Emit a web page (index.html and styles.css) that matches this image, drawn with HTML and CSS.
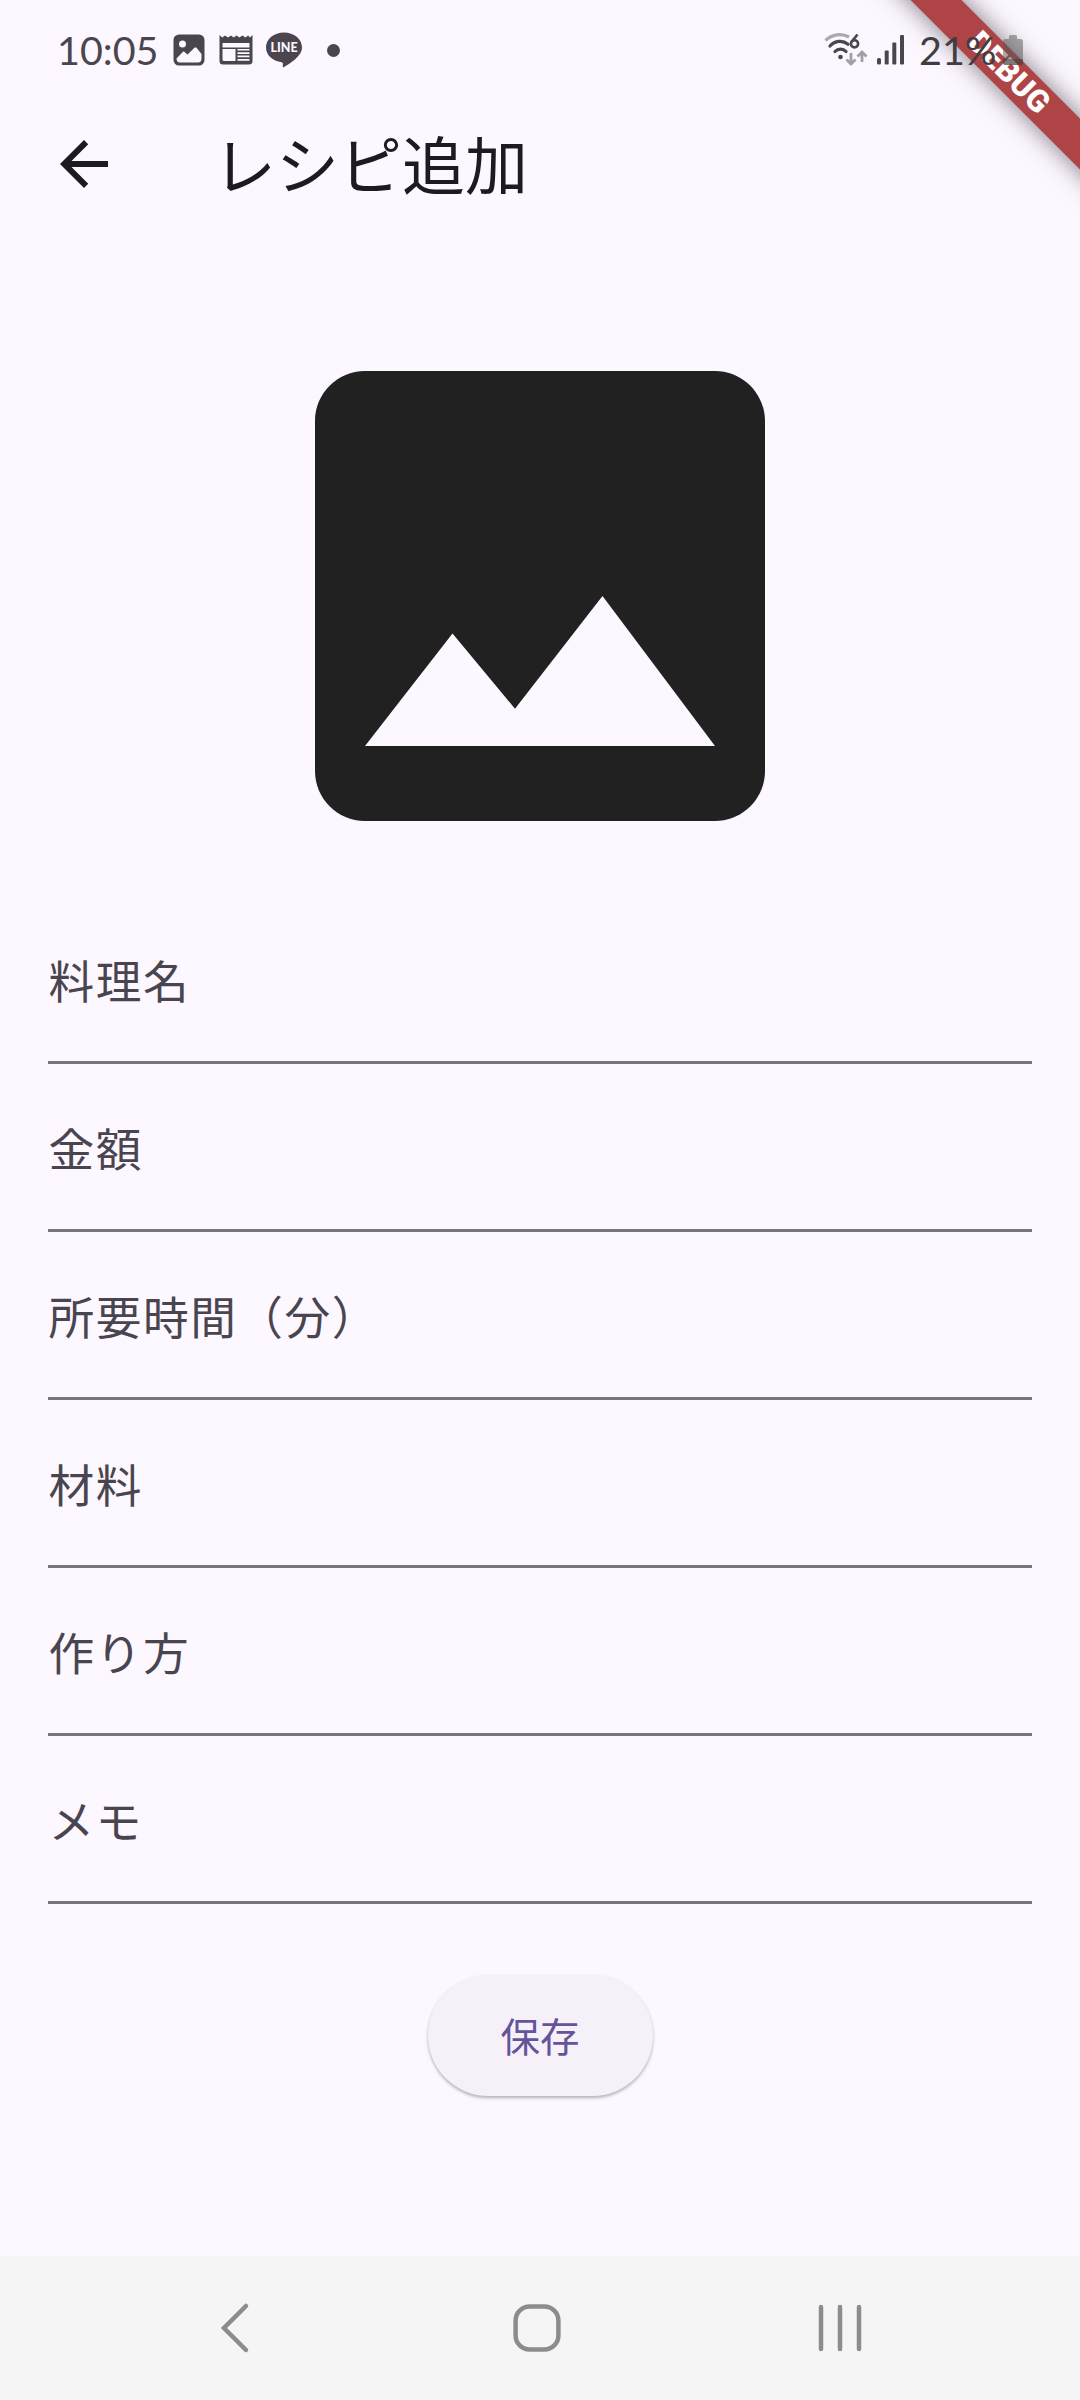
FILE: index.html
```
<!DOCTYPE html>
<html lang="ja">
<head>
<meta charset="utf-8">
<title>レシピ追加</title>
<link rel="stylesheet" href="styles.css">
</head>
<body>
<div class="screen">
  <div class="debug-banner">DEBUG</div>

  <header class="status-bar">
    <div class="status-left">
      <span class="clock">10:05</span>
      <svg class="icon-gallery" width="32" height="32" viewBox="0 0 32 32">
        <path fill="currentColor" fill-rule="evenodd" d="M6 .5h20a5.500 5.500 0 0 1 5.500 5.500v20a5.500 5.500 0 0 1-5.500 5.500H6A5.500 5.500 0 0 1 .5 26V6A5.500 5.500 0 0 1 6 .5zM9.500 6.500a3.500 3.500 0 1 0 0 7 3.500 3.500 0 0 0 0-7zM3.500 24.500c0 2.800 1.200 4 3.500 4h18c2.300 0 3.500-1.200 3.500-4V20L23.500 13.800c-.6-.7-1.400-.7-2 0L14.500 20.500l-3-2.600c-.6-.5-1.200-.4-1.700.1z"/>
      </svg>
      <svg class="icon-news" width="34" height="32" viewBox="0 0 34 32">
        <path fill="currentColor" fill-rule="evenodd" d="M.5 1l2.700 2.500L6 1.500l3 2 3-2 2.700 2 3-2 2.700 2 3-2 3 2 2.700-2L31 3.500 33.500 1v26a3.500 3.500 0 0 1-3.500 3.500H4A3.500 3.500 0 0 1 .5 27zM3.500 9v4.500h27V9zM3.500 15v10.500q0 1.500 1.500 1.500h11.500V15zM18.500 15v1.600h12V15zm0 3.300v1.600h12v-1.600zm0 3.300v1.600h12v-1.600zm0 3.400v1.700h12V25z"/>
      </svg>
      <svg class="icon-line" width="38" height="36" viewBox="0 0 38 36">
        <path fill="currentColor" d="M19 .5C9 .5 1 7 1 15.500c0 7.500 6.500 13.500 15.500 14.700 1.800.3 1.500 1.300 1.200 4.300 0 .8.500 1 1.200.6C25 31.500 37 24 37 15.500 37 7 29 .5 19 .5z"/>
        <text class="line-text" x="19" y="20.300" text-anchor="middle">LINE</text>
      </svg>
      <span class="dot"></span>
    </div>
    <div class="status-right">
      <svg class="icon-wifi" width="46" height="36" viewBox="0 0 46 36">
        <g fill="none" stroke="currentColor" stroke-width="3.200">
          <path opacity=".45" d="M1.500 8.500C8 2 17.500 1 25 5"/>
          <path d="M6 14c5-5.500 12.500-6.200 18-1.800" stroke-linecap="round"/>
          <path d="M11 19.500c3-3.300 8-3.300 11 0" stroke-linecap="round"/>
        </g>
        <circle cx="16.500" cy="25" r="2.300" fill="currentColor"/>
        <path d="M33.500 2.500L27.500 9.800" fill="none" stroke="currentColor" stroke-width="2.600"/>
        <circle cx="30.500" cy="11.800" r="3.600" fill="none" stroke="currentColor" stroke-width="2.600"/>
        <path opacity=".5" fill="none" stroke="currentColor" stroke-width="2.800" d="M27 21v11M22.500 27.500l4.500 4.500 4.500-4.500M38 30V20M33.500 24.500L38 20l4.500 4.500"/>
      </svg>
      <svg class="icon-signal" width="28" height="30" viewBox="0 0 28 30">
        <g fill="currentColor"><rect x="0" y="23" width="4" height="6.500" rx="1.500"/><rect x="7.700" y="15.500" width="4" height="14" rx="1"/><rect x="15.300" y="7.500" width="4" height="22" rx="1"/><rect x="23" y="0" width="4" height="29.500" rx="1"/></g>
      </svg>
      <span class="battery-level">21%</span>
      <svg class="icon-battery" width="20" height="31" viewBox="0 0 20 31">
        <path fill="#555" fill-opacity=".5" d="M6 1.500Q6 0 7.500 0h5Q14 0 14 1.500V4h3.500Q20 4 20 6.500V28q0 2-2 2H2q-2 0-2-2V6.500Q0 4 2.500 4H6z"/>
        <path fill="#333" fill-opacity=".4" d="M0 24h20v4q0 2-2 2H2q-2 0-2-2z"/>
      </svg>
    </div>
  </header>

  <div class="app-bar">
    <svg class="icon-back" width="72" height="72" viewBox="0 0 24 24"><path fill="currentColor" d="M20 11H7.830l5.590-5.590L12 4l-8 8 8 8 1.410-1.410L7.830 13H20z"/></svg>
    <h1 class="title">レシピ追加</h1>
  </div>

  <main class="content">
    <svg class="photo" width="450" height="450" viewBox="3 3 18 18"><path fill="currentColor" d="M21 19V5c0-1.100-.9-2-2-2H5c-1.100 0-2 .9-2 2v14c0 1.100.9 2 2 2h14c1.100 0 2-.9 2-2zM8.500 13.500l2.500 3.010L14.500 12l4.500 6H5z"/></svg>
    <form class="fields">
      <label class="field">料理名</label>
      <label class="field">金額</label>
      <label class="field">所要時間（分）</label>
      <label class="field">材料</label>
      <label class="field">作り方</label>
      <label class="field">メモ</label>
    </form>
    <button class="save" type="button">保存</button>
  </main>

  <nav class="nav-bar">
    <svg class="nav-back" width="30" height="52" viewBox="0 0 30 52"><path d="M26 4L4 26l22 22"/></svg>
    <svg class="nav-home" width="48" height="48" viewBox="0 0 48 48"><rect x="2.600" y="2.600" width="42.800" height="42.800" rx="14"/></svg>
    <svg class="nav-recents" width="44" height="48" viewBox="0 0 44 48"><path d="M3 3v42M22 3v42M41 3v42"/></svg>
  </nav>
</div>
</body>
</html>
```
FILE: styles.css
```
* { box-sizing: border-box; }

body {
  margin: 0;
  background: #fdf7ff;
  font-family: "Noto Sans CJK JP", sans-serif;
}

.screen {
  position: relative;
  display: flex;
  flex-direction: column;
  width: 1080px;
  height: 2400px;
  overflow: hidden;
  background: #fdf7ff;
}

.debug-banner {
  position: absolute;
  left: 769px;
  top: 54.500px;
  width: 480px;
  height: 36px;
  transform: rotate(45deg);
  background: #ae4446;
  box-shadow: 0 0 26px rgba(0, 0, 0, .5);
  color: #fff;
  font: 900 31px/35px Roboto, sans-serif;
  letter-spacing: .4px;
  text-align: center;
}

.status-bar {
  position: relative;
  display: flex;
  justify-content: space-between;
  align-items: flex-start;
  height: 100px;
  padding: 0 57px 0 57px;
  color: #4b464e;
}

.status-left,
.status-right {
  display: flex;
  align-items: center;
  height: 100px;
}

.clock,
.battery-level {
  font: 400 39.500px/48px Lato, sans-serif;
}

.clock { width: 116px; }
.icon-news { margin-left: 14px; }
.icon-line { margin-left: 12px; }
.line-text { font: 900 12.500px Lato, sans-serif; fill: #fdf7ff; }

.dot {
  width: 13px;
  height: 13px;
  margin-left: 24px;
  border-radius: 50%;
  background: currentColor;
}

.icon-signal { margin-left: 7px; }
.battery-level { width: 84px; margin-left: 14px; color: #403c42; }

.app-bar {
  display: flex;
  align-items: center;
  height: 128px;
  padding-left: 48px;
  color: #1d1b20;
}

.title {
  margin: -4px 0 0 93px;
  font-size: 63px;
  font-weight: 400;
  line-height: 80px;
}

.content {
  display: flex;
  flex: 1;
  flex-direction: column;
  align-items: center;
  padding: 143px 48px 0;
}

.photo { display: block; color: #212121; }

.fields { width: 100%; margin-top: 75px; }

.field {
  display: block;
  height: 168px;
  padding: 52.500px 0 0 .6px;
  border-bottom: 3px solid #79747e;
  color: #49454f;
  font-size: 45.700px;
  line-height: 60px;
  letter-spacing: 1.500px;
}

.save {
  width: 225px;
  height: 121px;
  margin-top: 71px;
  padding: 0 0 2px;
  border: 0;
  border-radius: 61px;
  background: #f6f1f9;
  box-shadow: 0 2px 3px rgba(0, 0, 0, .24), 0 2px 5px rgba(0, 0, 0, .06);
  color: #65549a;
  font: 400 39.500px/56px "Noto Sans CJK JP", sans-serif;
}

.nav-bar {
  display: flex;
  align-items: center;
  height: 144px;
  padding: 0 217px 0 220px;
  background: #f5f5f5;
}

.nav-bar svg {
  fill: none;
  stroke: #8c8c8c;
  stroke-width: 4.500;
  stroke-linecap: round;
}

.nav-home { margin-left: 263px; }
.nav-recents { margin-left: 257px; }
```
